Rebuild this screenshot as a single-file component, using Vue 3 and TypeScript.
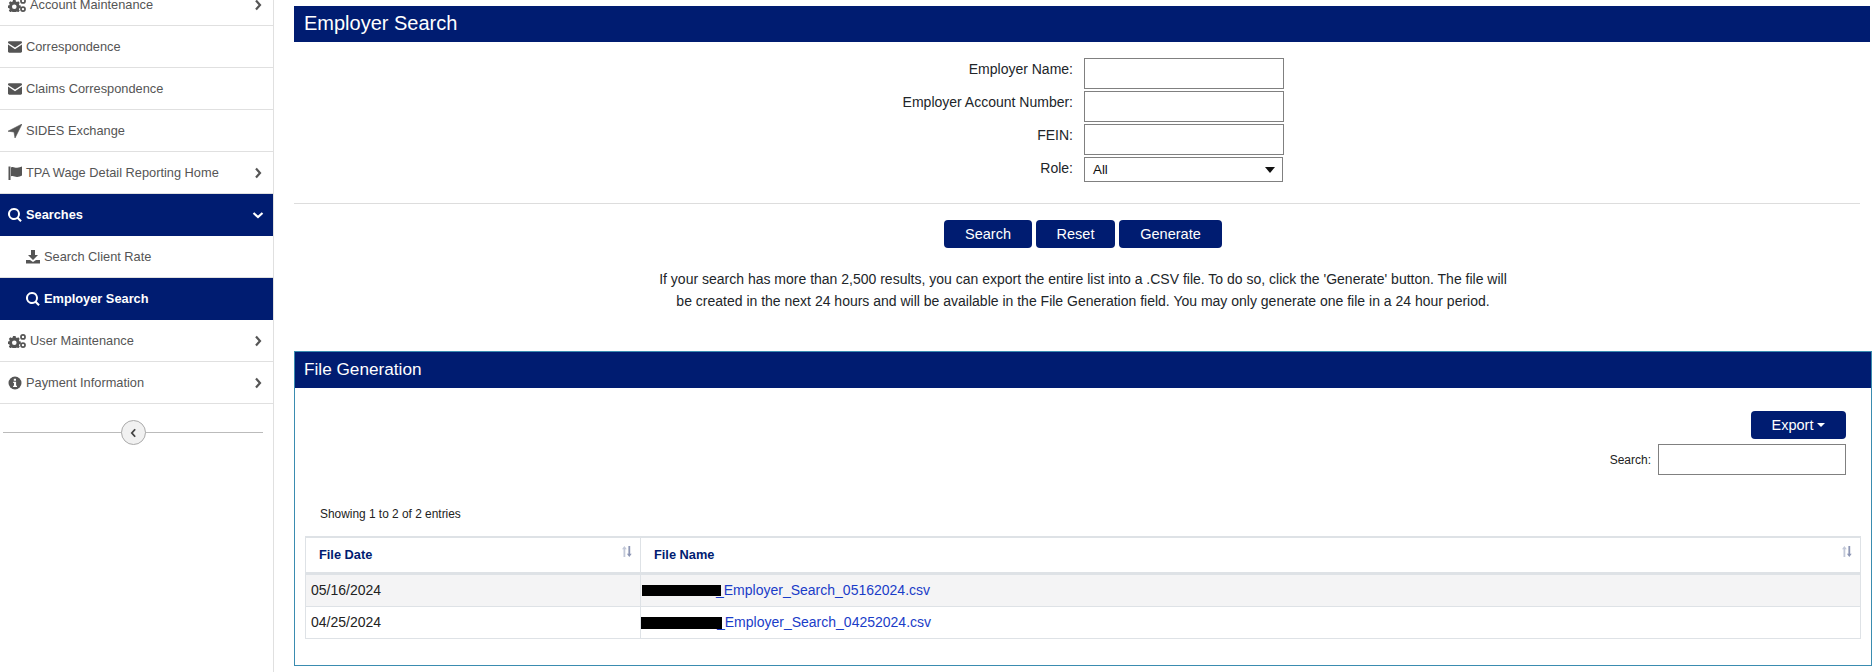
<script setup lang="ts">
const files = [
  { date: '05/16/2024', name: '_Employer_Search_05162024.csv', cls: 'r1' },
  { date: '04/25/2024', name: '_Employer_Search_04252024.csv', cls: 'r2' },
]
</script>

<template>
  <div class="page">
    <aside class="side">
      <ul class="menu">
        <li class="item"><svg class="ic cogs" viewBox="0 0 18 14"><use href="#cogs" /></svg><span>Account Maintenance</span><svg class="chev" viewBox="0 0 8 12"><path d="M2 1.500 6 6l-4 4.500" /></svg></li>
        <li class="item"><svg class="ic" viewBox="0 0 14 14"><use href="#env" /></svg><span>Correspondence</span></li>
        <li class="item"><svg class="ic" viewBox="0 0 14 14"><use href="#env" /></svg><span>Claims Correspondence</span></li>
        <li class="item"><svg class="ic" viewBox="0 0 14 14"><path d="M14 0 7 14 6 8 0 7.200z" stroke="#555" stroke-width=".6" stroke-linejoin="round" /></svg><span>SIDES Exchange</span></li>
        <li class="item"><svg class="ic" viewBox="0 0 14 14"><path d="M.5 .5h2v13.500h-2zM3 1.400C5.500 .2 7 2.200 9.200 1.800 11 1.500 12.600 1 14 .5v9c-1.400.9-3 1.400-4.800 1.500-2.300.1-3.800-1.500-6.200-.7z" /></svg><span>TPA Wage Detail Reporting Home</span><svg class="chev" viewBox="0 0 8 12"><path d="M2 1.500 6 6l-4 4.500" /></svg></li>
        <li class="item active"><svg class="ic" viewBox="0 0 14 14"><use href="#mag" /></svg><span>Searches</span><svg class="chev down" viewBox="0 0 12 8"><path d="M1.500 2 6 6l4.500-4" /></svg></li>
        <li class="item sub"><svg class="ic" viewBox="0 0 14 14"><path d="M5 0h4v5h3L7 10 2 5h3zM0 10h4l3 2 3-2h4v3.500H0z" /></svg><span>Search Client Rate</span></li>
        <li class="item sub active"><svg class="ic" viewBox="0 0 14 14"><use href="#mag" /></svg><span>Employer Search</span></li>
        <li class="item"><svg class="ic cogs" viewBox="0 0 18 14"><use href="#cogs" /></svg><span>User Maintenance</span><svg class="chev" viewBox="0 0 8 12"><path d="M2 1.500 6 6l-4 4.500" /></svg></li>
        <li class="item"><svg class="ic" viewBox="0 0 14 14"><circle cx="7" cy="7" r="6.500" /><path fill="#fff" d="M5.800 2.800h2.200v1.900H5.800zM5.200 5.800h2.900v4h.9v1.300H5.100V9.800h.9V7.100h-.8z" /></svg><span>Payment Information</span><svg class="chev" viewBox="0 0 8 12"><path d="M2 1.500 6 6l-4 4.500" /></svg></li>
      </ul>
      <div class="collapse">
        <button class="toggle"><svg viewBox="0 0 8 12"><path d="M6 1.500 2 6l4 4.500" /></svg></button>
      </div>
    </aside>

    <main class="main">
      <h1 class="title">Employer Search</h1>
      <form class="form">
        <label>Employer Name:</label><input type="text" />
        <label>Employer Account Number:</label><input type="text" />
        <label>FEIN:</label><input type="text" />
        <label>Role:</label>
        <div class="select"><span>All</span><i class="arrow"></i></div>
      </form>
      <hr class="rule" />
      <div class="buttons">
        <button class="btn b-search">Search</button>
        <button class="btn b-reset">Reset</button>
        <button class="btn b-gen">Generate</button>
      </div>
      <p class="note">If your search has more than 2,500 results, you can export the entire list into a .CSV file. To do so, click the 'Generate' button. The file will<br />be created in the next 24 hours and will be available in the File Generation field. You may only generate one file in a 24 hour period.</p>

      <section class="panel">
        <h2 class="panel-head">File Generation</h2>
        <div class="panel-body">
          <div class="tools">
            <button class="btn export">Export<i class="caret"></i></button>
            <div class="filter"><label>Search:</label><input type="text" /></div>
          </div>
          <div class="info">Showing 1 to 2 of 2 entries</div>
          <table class="grid">
            <thead>
              <tr>
                <th class="c1">File Date<svg class="sort" viewBox="0 0 10 11"><use href="#sort" /></svg></th>
                <th>File Name<svg class="sort" viewBox="0 0 10 11"><use href="#sort" /></svg></th>
              </tr>
            </thead>
            <tbody>
              <tr v-for="f in files" :key="f.date">
                <td>{{ f.date }}</td>
                <td class="filecell"><i class="redact" :class="f.cls"></i><a>{{ f.name }}</a></td>
              </tr>
            </tbody>
          </table>
        </div>
      </section>
    </main>

    <svg class="defs" width="0" height="0">
      <defs>
        <path id="env" d="M0 2.500C0 1.700.6 1.200 1.300 1.200h11.400c.7 0 1.300.5 1.300 1.300v.5L7 7.600 0 3zM0 4.600l7 4.600 7-4.600v7c0 .7-.6 1.200-1.300 1.200H1.300C.6 12.800 0 12.300 0 11.600z" />
        <path id="mag" fill-rule="evenodd" d="M6 0a6 6 0 0 1 4.800 9.500l3 3-1.500 1.500-3-3A6 6 0 1 1 6 0zm0 2a4 4 0 1 0 0 8 4 4 0 0 0 0-8z" />
        <g id="cogs" fill-rule="evenodd">
          <path d="M5 2h2.600l.3 1.500 1.100.5 1.300-.8 1.500 1.700-.9 1.200.4 1.200 1.500.3v2.300l-1.500.3-.4 1.200.9 1.200-1.500 1.700-1.300-.8-1.100.5-.3 1H5l-.3-1-1.100-.5-1.300.8-1.500-1.700.9-1.200-.4-1.200L0 9.900V7.600l1.300-.3.400-1.200-.9-1.200 1.500-1.700 1.300.8 1.100-.5zM6.300 6.500a2.300 2.300 0 1 0 0 4.600 2.300 2.300 0 0 0 0-4.600z" />
          <path d="M15 0a2.900 2.900 0 1 1 0 5.800A2.900 2.900 0 0 1 15 0zm0 1.700a1.200 1.200 0 1 0 0 2.400 1.200 1.200 0 0 0 0-2.400zM15 8.200a2.900 2.900 0 1 1 0 5.800 2.900 2.900 0 0 1 0-5.800zm0 1.700a1.200 1.200 0 1 0 0 2.400 1.200 1.200 0 0 0 0-2.400z" />
        </g>
        <g id="sort">
          <path fill="#c2c8d8" d="M2.400 0 4.800 3.200H3.300v7.800H1.500V3.200H0z" />
          <path fill="#8c95b4" d="M7.300 11 4.900 7.800h1.500V0h1.800v7.800h1.500z" />
        </g>
      </defs>
    </svg>
  </div>
</template>

<style>
html, body { margin: 0; background: #fff; overflow: hidden; }
</style>

<style scoped>
.page {
  display: flex;
  width: 1873px;
  height: 672px;
  overflow: hidden;
  font-family: "Liberation Sans", Arial, sans-serif;
  color: #212529;
  background: #fff;
}
.defs { position: absolute; }

/* sidebar */
.side {
  flex: 0 0 273px;
  height: 672px;
  border-right: 1px solid #e0e0e0;
  margin-right: 20px;
}
.menu { list-style: none; margin: -16px 0 0; padding: 0; }
.item {
  display: flex;
  align-items: center;
  box-sizing: border-box;
  height: 42px;
  padding: 0 11px 0 8px;
  border-bottom: 1px solid #e0e0e0;
  font-size: 12.800px;
  color: #555;
}
.item .ic { width: 14px; height: 14px; fill: #555; margin-right: 4px; flex: none; }
.item .ic.cogs { width: 18px; margin-right: 4px; }
.item span { flex: 1; }
.chev { width: 8px; height: 12px; fill: none; stroke: #555; stroke-width: 2.200; flex: none; }
.chev.down { width: 12px; height: 8px; stroke: #fff; margin-right: -2px; }
.item.sub { padding-left: 26px; }
.item.active { background: #001c71; color: #fff; font-weight: 700; border-bottom-color: #001c71; }
.item.active .ic { fill: #fff; }
.collapse {
  display: flex;
  justify-content: center;
  position: relative;
  margin: 16px 10px 0 3px;
  height: 25px;
}
.collapse::before {
  content: "";
  position: absolute;
  left: 0;
  right: 0;
  top: 12px;
  border-top: 1px solid #bbb;
}
.toggle {
  position: relative;
  box-sizing: border-box;
  width: 25px;
  height: 25px;
  padding: 0;
  border: 1px solid #aaa;
  border-radius: 50%;
  background: #f1f1f1;
  display: flex;
  align-items: center;
  justify-content: center;
}
.toggle svg { width: 7px; height: 10px; fill: none; stroke: #444; stroke-width: 2.200; }

/* main */
.main { flex: 0 0 1578px; padding-top: 6px; }
.title {
  margin: 0;
  height: 36px;
  line-height: 35px;
  padding-left: 10px;
  background: #001c71;
  color: #fff;
  font-size: 20px;
  font-weight: 400;
  width: 1566px;
}
.form {
  display: grid;
  grid-template-columns: 779px 200px;
  column-gap: 11px;
  row-gap: 2px;
  margin-top: 16px;
  font-size: 14px;
}
.form label { text-align: right; line-height: 22px; color: #212529; }
.form input { box-sizing: border-box; height: 31px; width: 200px; border: 1px solid #808080; margin: 0; background: #fff; }
.select {
  box-sizing: border-box;
  display: flex;
  align-items: center;
  justify-content: space-between;
  width: 199px;
  height: 25px;
  border: 1px solid #808080;
  padding: 0 7px 0 8px;
  font-size: 13.333px;
  color: #111;
}
.arrow { border: 5px solid transparent; border-top: 6px solid #111; border-bottom: 0; }
.rule { margin: 21px 0 0; width: 1566px; border: 0; border-top: 1px solid #ddd; }
.buttons { display: flex; margin: 16px 0 0 650px; gap: 4px; }
.btn {
  box-sizing: border-box;
  height: 28px;
  padding: 0;
  background: #001c71;
  color: #fff;
  border: 0;
  border-radius: 4px;
  font: 400 14.500px "Liberation Sans", Arial, sans-serif;
}
.b-search { width: 88px; }
.b-reset { width: 79px; }
.b-gen { width: 103px; }
.note {
  margin: 20px 0 0;
  width: 1578px;
  text-align: center;
  font-size: 14px;
  line-height: 22px;
  color: #212529;
}

.panel {
  box-sizing: border-box;
  width: 1578px;
  height: 315px;
  margin-top: 39px;
  border: 1px solid #3a8cb0;
}
.panel-head {
  margin: 0;
  height: 36px;
  line-height: 34px;
  padding-left: 9px;
  background: #001c71;
  color: #fff;
  font-size: 17.200px;
  font-weight: 400;
}
.panel-body { padding: 0 10px; }
.tools { display: flex; flex-direction: column; align-items: flex-end; padding: 23px 15px 0 0; }
.export { width: 95px; display: flex; align-items: center; justify-content: center; }
.caret { margin-left: 4px; border: 4px solid transparent; border-top: 4px solid #fff; border-bottom: 0; }
.filter { display: flex; align-items: center; margin-top: 5px; font-size: 12px; color: #222; }
.filter label { margin-right: 7px; }
.filter input { box-sizing: border-box; width: 188px; height: 31px; border: 1px solid #808080; margin: 0; }
.info { margin: 31px 0 0 15px; font-size: 11.900px; line-height: 16px; color: #222; }
.grid {
  border-collapse: collapse;
  table-layout: fixed;
  width: 1556px;
  margin-top: 14px;
  font-size: 14px;
}
.grid th {
  position: relative;
  box-sizing: border-box;
  height: 36px;
  padding: 0 0 0 13px;
  text-align: left;
  color: #001c71;
  font-weight: 700;
  font-size: 12.800px;
  border: 1px solid #dee2e6;
  border-top-width: 2px;
  border-bottom: 3px solid #dee2e6;
}
.grid th.c1 { width: 335px; }
.sort {
  position: absolute;
  right: 8px;
  top: 8px;
  width: 10px;
  height: 11px;
}
.grid td {
  height: 31px;
  padding: 0 0 0 5px;
  border: 1px solid #dee2e6;
  color: #222;
}
.grid tbody tr:first-child td { background: #f4f4f5; }
.grid td.filecell { padding-left: 1px; white-space: nowrap; }
.redact { display: inline-block; vertical-align: middle; height: 11px; background: #000; margin-right: -5px; }
.r1 { width: 79px; }
.r2 { width: 81px; height: 12px; margin-left: -1px; margin-right: -5px; }
.filecell a { color: #1a3cc8; vertical-align: middle; }
</style>
